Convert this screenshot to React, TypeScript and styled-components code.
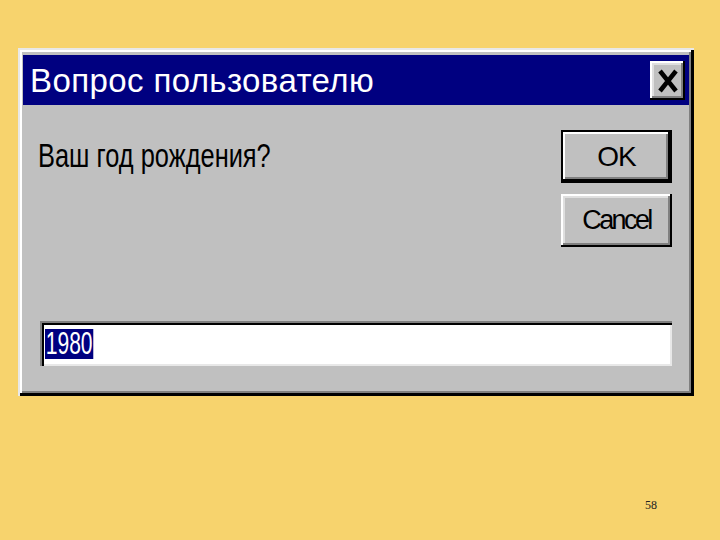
import styled, { createGlobalStyle } from 'styled-components';

const GlobalStyle = createGlobalStyle`
  html, body {
    margin: 0;
    padding: 0;
    background: #f7d36d;
  }
  body {
    width: 720px;
    height: 540px;
    overflow: hidden;
    font-family: 'Liberation Sans', Arial, sans-serif;
  }
`;

const Slide = styled.div`
  width: 720px;
  height: 540px;
  display: flex;
  flex-direction: column;
  padding: 48px 0 0 18px;
  box-sizing: border-box;
`;

const Dialog = styled.div`
  width: 676px;
  height: 348px;
  box-sizing: border-box;
  background: #c0c0c0;
  padding: 5px;
  display: flex;
  flex-direction: column;
  box-shadow:
    inset 2px 2px 0 #e8e8e8,
    inset -3px -3px 0 #000000,
    inset 4px 4px 0 #ffffff,
    inset -5px -5px 0 #808080;
`;

const TitleBar = styled.div`
  height: 50px;
  margin-top: 2px;
  background: #000080;
  display: flex;
  align-items: center;
  justify-content: space-between;
  padding: 0 4px 0 7px;
`;

const TitleText = styled.span`
  color: #ffffff;
  font-size: 33px;
  letter-spacing: 0.4px;
  line-height: 1;
`;

const Bevel = styled.button`
  background: #c0c0c0;
  border: none;
  padding: 0;
  margin: 0;
  color: #000000;
  font-family: 'Liberation Sans', Arial, sans-serif;
  box-shadow:
    inset -2px -2px 0 #000000,
    inset 2px 2px 0 #ffffff,
    inset -4px -4px 0 #808080,
    inset 4px 4px 0 #dfdfdf;
  display: flex;
  align-items: center;
  justify-content: center;
`;

const CloseButton = styled(Bevel)`
  width: 35px;
  height: 39px;
  margin-top: 1px;
`;

const Body = styled.div`
  flex: 1;
  display: flex;
  flex-direction: column;
  padding: 25px 17px 0 17px;
`;

const TopRow = styled.div`
  display: flex;
  justify-content: space-between;
  align-items: flex-start;
`;

const Question = styled.div`
  font-size: 33px;
  color: #000000;
  margin: 9px 0 0 -2px;
  line-height: 1;
  transform: scaleX(0.77);
  transform-origin: left center;
  white-space: nowrap;
`;

const Buttons = styled.div`
  display: flex;
  flex-direction: column;
  gap: 11px;
`;

const DialogButton = styled(Bevel)<{ $default?: boolean }>`
  width: 111px;
  height: 53px;
  font-size: ${({ $default }) => ($default ? '28px' : '27px')};
  letter-spacing: ${({ $default }) => ($default ? '-1px' : '-2.6px')};
  ${({ $default }) =>
    $default
      ? `box-shadow:
          inset 0 0 0 2px #000000,
          inset -4px -4px 0 #000000,
          inset 4px 4px 0 #ffffff,
          inset -6px -6px 0 #808080;`
      : ''}
`;

const InputField = styled.div`
  margin-top: 74px;
  height: 45px;
  background: #ffffff;
  box-sizing: border-box;
  padding: 7px 5px;
  display: flex;
  align-items: center;
  box-shadow:
    inset 2px 2px 0 #808080,
    inset 4px 4px 0 #000000,
    inset -2px -2px 0 #e8e8e8;
`;

const Selected = styled.span`
  display: inline-block;
  background: #000080;
  color: #ffffff;
  font-size: 31px;
  line-height: 30px;
  padding: 0 1px;
  transform: scaleX(0.68);
  transform-origin: left center;
`;

const PageNumber = styled.div`
  font-family: 'Liberation Serif', 'Times New Roman', serif;
  font-size: 12px;
  color: #222222;
  margin: 102px 0 0 627px;
`;

const CloseIcon = () => (
  <svg width="22" height="26" viewBox="0 0 22 26">
    <path d="M3 3 L19 23 M19 3 L3 23" stroke="#000" strokeWidth="4.5" />
  </svg>
);

export default function App() {
  return (
    <>
      <GlobalStyle />
      <Slide>
        <Dialog>
          <TitleBar>
            <TitleText>Вопрос пользователю</TitleText>
            <CloseButton>
              <CloseIcon />
            </CloseButton>
          </TitleBar>
          <Body>
            <TopRow>
              <Question>Ваш год рождения?</Question>
              <Buttons>
                <DialogButton $default>OK</DialogButton>
                <DialogButton>Cancel</DialogButton>
              </Buttons>
            </TopRow>
            <InputField>
              <Selected>1980</Selected>
            </InputField>
          </Body>
        </Dialog>
        <PageNumber>58</PageNumber>
      </Slide>
    </>
  );
}
